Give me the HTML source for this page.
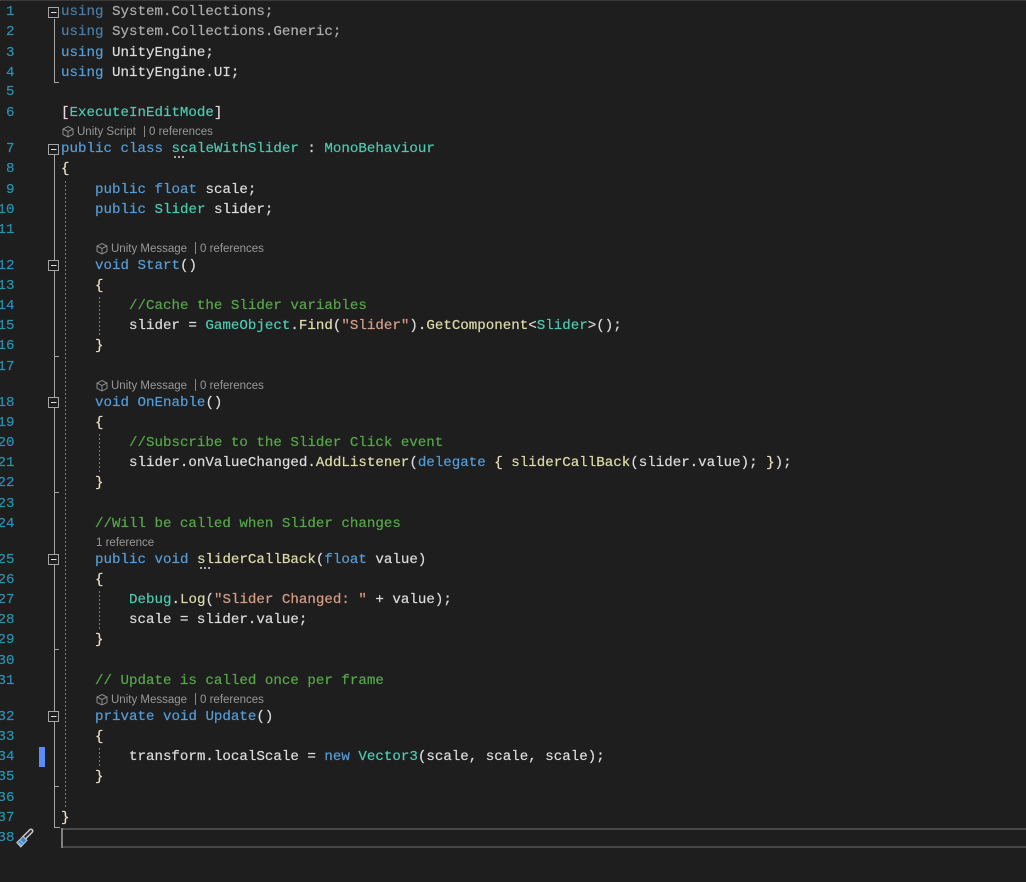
<!DOCTYPE html>
<html><head><meta charset="utf-8">
<style>
html,body{margin:0;padding:0;background:#1e1e1e}
#p{position:relative;width:1026px;height:882px;overflow:hidden;background:#1e1e1e}
.l,.n,.c{position:absolute;white-space:pre;line-height:20px;height:20px}
.l{left:61px;margin-top:1px;font:14.17px/20px "Liberation Mono",monospace;color:#dcdcdc;-webkit-text-stroke:.2px}
.n{left:-3px;width:17.5px;margin-top:1px;text-align:right;font:14.17px/20px "Liberation Mono",monospace;color:#2b91af;-webkit-text-stroke:.2px}
.c{font:11.5px/14px "Liberation Sans",sans-serif;color:#999;height:14px}
.k{color:#569cd6}.t{color:#4ec9b0}.m{color:#dcdcaa}.s{color:#d69d85}.g{color:#57a64a}.b{color:#ece0c4}
svg{position:absolute;left:0;top:0}
</style></head><body><div id="p">
<svg width="1026" height="882" fill="none">
<rect x="0" y="0" width="1026" height="1" fill="#3a3a3a"/>
<g stroke="#a5a5a5" stroke-width="1">
<path d="M54.5 19V82.5H59"/>
<path d="M54.5 155V827.5H60"/>
<path d="M54.5 356.5H59M54.5 492.5H59M54.5 649.5H59M54.5 786.5H59"/>
</g>
<g stroke="#7a7a7a" stroke-width="1" stroke-dasharray="2 2">
<path d="M65.5 181V808"/>
<path d="M99.5 297V336M99.5 434V473M99.5 591V630M99.5 748V768"/>
</g>
<g fill="#1e1e1e" stroke="#a5a5a5">
<rect x="48.5" y="7.5" width="10" height="10"/>
<rect x="48.5" y="144.5" width="10" height="10"/>
<rect x="48.5" y="260.5" width="10" height="10"/>
<rect x="48.5" y="397.5" width="10" height="10"/>
<rect x="48.5" y="554.5" width="10" height="10"/>
<rect x="48.5" y="711.5" width="10" height="10"/>
</g>
<g stroke="#e0e0e0"><path d="M51 12.5H56.5M51 149.5H56.5M51 265.5H56.5M51 402.5H56.5M51 559.5H56.5M51 716.5H56.5"/></g>
<rect x="39" y="747" width="6" height="20" fill="#5a8cff"/>
<rect x="61" y="828" width="965" height="2" fill="#484848"/>
<rect x="61" y="846" width="965" height="2" fill="#484848"/>
<rect x="61" y="828" width="2" height="20" fill="#808080"/>
<g fill="#aaa">
<rect x="174" y="156" width="2" height="2"/><rect x="178" y="156" width="2" height="2"/><rect x="182" y="156" width="2" height="2"/>
<rect x="200" y="567" width="2" height="2"/><rect x="204" y="567" width="2" height="2"/><rect x="208" y="567" width="2" height="2"/>
</g>
<g stroke="#8c8c8c" stroke-width="1" fill="none">
<path d="M68 126.5L73 129V134.5L68 137L63 134.5V129ZM63 129L68 131.5L73 129M68 131.5V137"/>
<path transform="translate(34 117)" d="M68 126.5L73 129V134.5L68 137L63 134.5V129ZM63 129L68 131.5L73 129M68 131.5V137"/>
<path transform="translate(34 254)" d="M68 126.5L73 129V134.5L68 137L63 134.5V129ZM63 129L68 131.5L73 129M68 131.5V137"/>
<path transform="translate(34 568)" d="M68 126.5L73 129V134.5L68 137L63 134.5V129ZM63 129L68 131.5L73 129M68 131.5V137"/>
</g>
<g stroke="#888"><path d="M144.5 126V137M195.5 242V254M195.5 379V391M195.5 693V705"/></g>
<path d="M24 838L31 831" stroke="#c8c8c8" stroke-width="5" stroke-linecap="round"/>
<path d="M24.5 837.5L31 831" stroke="#2a2a2a" stroke-width="2" stroke-linecap="round"/>
<path d="M16.8 842.5L23 836.3L27 840.3L20.8 847Z" fill="#3f86c8" stroke="#c8c8c8" stroke-width="1"/>
<path d="M20 840.5L24 844M18.5 842.5L22 846" stroke="#9cc6ea" stroke-width="1"/>
</svg>
<div class="n" style="top:1px">1</div>
<div class="n" style="top:21px">2</div>
<div class="n" style="top:42px">3</div>
<div class="n" style="top:62px">4</div>
<div class="n" style="top:81px">5</div>
<div class="n" style="top:102px">6</div>
<div class="n" style="top:138px">7</div>
<div class="n" style="top:158px">8</div>
<div class="n" style="top:179px">9</div>
<div class="n" style="top:199px">10</div>
<div class="n" style="top:219px">11</div>
<div class="n" style="top:255px">12</div>
<div class="n" style="top:275px">13</div>
<div class="n" style="top:295px">14</div>
<div class="n" style="top:315px">15</div>
<div class="n" style="top:335px">16</div>
<div class="n" style="top:356px">17</div>
<div class="n" style="top:392px">18</div>
<div class="n" style="top:412px">19</div>
<div class="n" style="top:432px">20</div>
<div class="n" style="top:452px">21</div>
<div class="n" style="top:472px">22</div>
<div class="n" style="top:493px">23</div>
<div class="n" style="top:513px">24</div>
<div class="n" style="top:549px">25</div>
<div class="n" style="top:569px">26</div>
<div class="n" style="top:589px">27</div>
<div class="n" style="top:609px">28</div>
<div class="n" style="top:629px">29</div>
<div class="n" style="top:650px">30</div>
<div class="n" style="top:670px">31</div>
<div class="n" style="top:706px">32</div>
<div class="n" style="top:726px">33</div>
<div class="n" style="top:746px">34</div>
<div class="n" style="top:766px">35</div>
<div class="n" style="top:787px">36</div>
<div class="n" style="top:807px">37</div>
<div class="n" style="top:827px">38</div>

<div class="l" style="top:1px"><span style="opacity:.75"><span class="k">using</span> System.Collections;</span></div>
<div class="l" style="top:21px"><span style="opacity:.75"><span class="k">using</span> System.Collections.Generic;</span></div>
<div class="l" style="top:42px"><span class="k">using</span> UnityEngine;</div>
<div class="l" style="top:62px"><span class="k">using</span> UnityEngine.UI;</div>
<div class="l" style="top:102px">[<span class="t">ExecuteInEditMode</span>]</div>
<div class="c" style="left:77px;top:125px">Unity Script</div>
<div class="c" style="left:149px;top:125px">0 references</div>
<div class="l" style="top:138px"><span class="k">public</span> <span class="k">class</span> <span class="t">scaleWithSlider</span> : <span class="t">MonoBehaviour</span></div>
<div class="l" style="top:158px"><span class="b">{</span></div>
<div class="l" style="top:179px">    <span class="k">public</span> <span class="k">float</span> scale;</div>
<div class="l" style="top:199px">    <span class="k">public</span> <span class="t">Slider</span> slider;</div>
<div class="c" style="left:111px;top:242px">Unity Message</div>
<div class="c" style="left:200px;top:242px">0 references</div>
<div class="l" style="top:255px">    <span class="k">void</span> <span class="k">Start</span>()</div>
<div class="l" style="top:275px">    <span class="b">{</span></div>
<div class="l" style="top:295px">        <span class="g">//Cache the Slider variables</span></div>
<div class="l" style="top:315px">        slider = <span class="t">GameObject</span>.<span class="m">Find</span>(<span class="s">"Slider"</span>).<span class="m">GetComponent</span>&lt;<span class="t">Slider</span>&gt;();</div>
<div class="l" style="top:335px">    <span class="b">}</span></div>
<div class="c" style="left:111px;top:379px">Unity Message</div>
<div class="c" style="left:200px;top:379px">0 references</div>
<div class="l" style="top:392px">    <span class="k">void</span> <span class="k">OnEnable</span>()</div>
<div class="l" style="top:412px">    <span class="b">{</span></div>
<div class="l" style="top:432px">        <span class="g">//Subscribe to the Slider Click event</span></div>
<div class="l" style="top:452px">        slider.onValueChanged.<span class="m">AddListener</span>(<span class="k">delegate</span> <span class="b">{</span> <span class="m">sliderCallBack</span>(slider.value); <span class="b">}</span>);</div>
<div class="l" style="top:472px">    <span class="b">}</span></div>
<div class="l" style="top:513px">    <span class="g">//Will be called when Slider changes</span></div>
<div class="c" style="left:96px;top:536px">1 reference</div>
<div class="l" style="top:549px">    <span class="k">public</span> <span class="k">void</span> <span class="m">sliderCallBack</span>(<span class="k">float</span> value)</div>
<div class="l" style="top:569px">    <span class="b">{</span></div>
<div class="l" style="top:589px">        <span class="t">Debug</span>.<span class="m">Log</span>(<span class="s">"Slider Changed: "</span> + value);</div>
<div class="l" style="top:609px">        scale = slider.value;</div>
<div class="l" style="top:629px">    <span class="b">}</span></div>
<div class="l" style="top:670px">    <span class="g">// Update is called once per frame</span></div>
<div class="c" style="left:111px;top:693px">Unity Message</div>
<div class="c" style="left:200px;top:693px">0 references</div>
<div class="l" style="top:706px">    <span class="k">private</span> <span class="k">void</span> <span class="k">Update</span>()</div>
<div class="l" style="top:726px">    <span class="b">{</span></div>
<div class="l" style="top:746px">        transform.localScale = <span class="k">new</span> <span class="t">Vector3</span>(scale, scale, scale);</div>
<div class="l" style="top:766px">    <span class="b">}</span></div>
<div class="l" style="top:807px"><span class="b">}</span></div>
</div></body></html>
